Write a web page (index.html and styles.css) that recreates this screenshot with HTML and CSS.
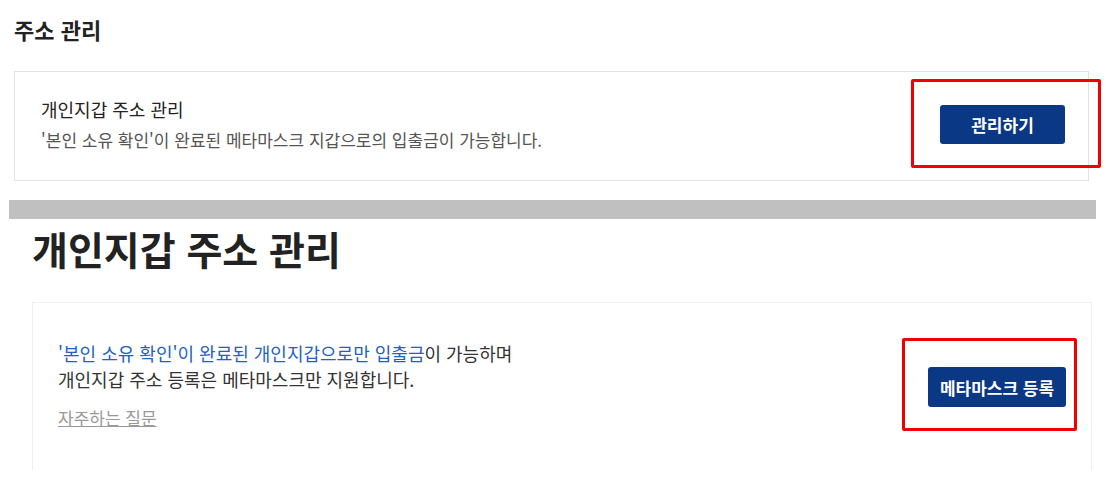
FILE: index.html
```html
<!DOCTYPE html>
<html lang="ko">
<head>
<meta charset="utf-8">
<title>주소 관리</title>
<link rel="stylesheet" href="styles.css">
</head>
<body>
<section class="top">
  <h2 class="top-title">주소 관리</h2>
  <div class="card card-small">
    <div class="card-text">
      <p class="card-title">개인지갑 주소 관리</p>
      <p class="card-desc">'본인 소유 확인'이 완료된 메타마스크 지갑으로의 입출금이 가능합니다.</p>
    </div>
    <button class="btn btn-manage" type="button">관리하기</button>
  </div>
</section>
<div class="divider"></div>
<section class="detail">
  <h1 class="detail-title">개인지갑 주소 관리</h1>
  <div class="card card-large">
    <div class="card-text">
      <p class="detail-desc"><span class="hl">'본인 소유 확인'이 완료된 개인지갑으로만 입출금</span>이 가능하며<br>개인지갑 주소 등록은 메타마스크만 지원합니다.</p>
      <a class="faq" href="#">자주하는 질문</a>
    </div>
    <button class="btn btn-register" type="button">메타마스크 등록</button>
  </div>
</section>
</body>
</html>
```
FILE: styles.css
```css
* { box-sizing: border-box; }
html, body { margin: 0; padding: 0; background: #fff; }
body {
  font-family: "Noto Sans CJK KR", "Noto Sans", sans-serif;
  color: #222;
  width: 1106px;
}
p { margin: 0; }

.top { padding: 14px 0 0 14px; }
.top-title {
  margin: 0;
  font-size: 22px;
  line-height: 30px;
  font-weight: 700;
  color: #222;
}
.card {
  display: flex;
  align-items: center;
  justify-content: space-between;
}
.card-small {
  margin-top: 27px;
  width: 1075px;
  height: 110px;
  border: 1px solid #e2e2e2;
  padding: 0 23px 4px 26px;
}
.card-title {
  font-size: 18px;
  line-height: 26px;
  color: #222;
}
.card-desc {
  margin-top: 6px;
  font-size: 17px;
  line-height: 24px;
  color: #555;
}
.btn {
  position: relative;
  border: 0;
  border-radius: 3px;
  background: #0b3884;
  color: #fff;
  font-family: inherit;
  font-weight: 700;
  font-size: 17px;
  height: 40px;
  padding: 0;
  cursor: pointer;
}
.btn::after {
  content: "";
  position: absolute;
  border: 3px solid #f00000;
  border-radius: 2px;
  pointer-events: none;
}
.btn-manage { width: 125px; height: 39px; }
.btn-manage::after { top: -26px; bottom: -24px; left: -29px; right: -36px; }
.btn-register { width: 138px; margin-top: 5px; }
.btn-register::after { top: -29px; bottom: -24px; left: -26px; right: -11px; }

.divider {
  margin: 19px 0 0 9px;
  width: 1087px;
  height: 19px;
  background: #c0c0c0;
}
.detail { padding-left: 32px; }
.detail-title {
  margin: 5px 0 0;
  font-size: 39px;
  line-height: 48px;
  font-weight: 700;
  color: #222;
}
.card-large {
  margin-top: 30px;
  width: 1060px;
  height: 168px;
  border: 1px solid #efefef;
  border-bottom: 0;
  padding: 35px 25px 39px 25px;
  align-items: center;
}
.detail-desc {
  font-size: 18px;
  line-height: 26px;
  color: #333;
}
.hl { color: #1f62c4; }
.faq {
  display: inline-block;
  margin-top: 14px;
  font-size: 17px;
  line-height: 24px;
  color: #999;
  text-decoration: underline;
}
```
